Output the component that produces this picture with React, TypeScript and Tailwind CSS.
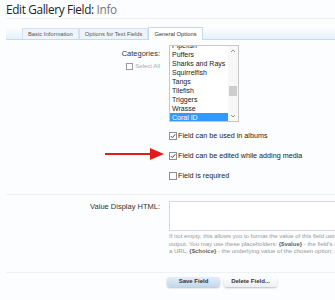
import React from "react";

const fishes = ["Pipefish", "Puffers", "Sharks and Rays", "Squirrelfish", "Tangs", "Tilefish", "Triggers", "Wrasse"];

function Check({ checked }: { checked: boolean }) {
  return (
    <span className="inline-flex h-[8px] w-[8px] items-center justify-center border border-[#8f8f8f] bg-white">
      {checked && (
        <svg width="6" height="6" viewBox="0 0 6 6">
          <path d="M0.8 3.1 L2.4 4.7 L5.3 1.2" fill="none" stroke="#333" strokeWidth="0.9" />
        </svg>
      )}
    </span>
  );
}

function CheckRow({ label, checked }: { label: string; checked: boolean }) {
  return (
    <div className="flex h-[9px] items-center gap-[1px] text-[7.2px] leading-[9px] text-[#222]">
      <Check checked={checked} />
      <span>{label}</span>
    </div>
  );
}

export default function App() {
  const tabs = ["Basic Information", "Options for Text Fields", "General Options"];
  return (
    <div
      className="relative h-[300px] w-[335px] overflow-hidden bg-[#fcfdfe]"
      style={{ fontFamily: '"Liberation Sans", Arial, sans-serif' }}
    >
      {/* title */}
      <div
        className="ml-[6px] h-[19px] border-b border-[#eef1f5] pt-[1px] text-[11.8px] leading-[16px] tracking-[-0.35px] text-[#222]"
        style={{ fontFamily: '"Open Sans", sans-serif' }}
      >
        Edit Gallery Field: <span className="text-[#777]">Info</span>
      </div>

      {/* tabs */}
      <div className="ml-[6px] mt-[8px] flex h-[13px] items-end border-b border-[#c4daf0] bg-gradient-to-b from-[#fcfdfe] to-[#e7f0f9] pl-[16px]">
        {tabs.map((t, i) => (
          <div
            key={t}
            className={
              i === 2
                ? "-mb-[1px] flex h-[13px] items-center border border-b-0 border-[#c4daf0] bg-white px-[5px] text-[5.8px] text-[#333]"
                : "flex h-[11px] items-center border border-b-0 border-[#d3e2f1] bg-[#eef4fa] px-[5px] text-[5.8px] text-[#555]"
            }
          >
            {t}
          </div>
        ))}
      </div>

      {/* categories */}
      <div className="mt-[5px] flex">
        <div className="flex w-[169px] shrink-0 flex-col items-end pr-[9px] pt-[4px]">
          <div className="text-[7.5px] leading-[9px] text-[#333]">Categories:</div>
          <div className="mt-[4px] flex items-center gap-[2px] text-[6px] text-[#aaa]">
            <span className="inline-block h-[7px] w-[7px] border border-[#999] bg-white" />
            <span>Select All</span>
          </div>
        </div>
        <div>
          <div className="flex h-[77px] w-[70px] overflow-hidden border border-[#c7c7c7] bg-white">
            <div className="flex-1 overflow-hidden">
              <div className="-mt-[5px] text-[7px] leading-[9px] text-[#222]">
                {fishes.map((f) => (
                  <div key={f} className="pl-[2px]">{f}</div>
                ))}
                <div className="bg-[#3399ff] pl-[2px] text-white">Coral ID</div>
              </div>
            </div>
            <div className="flex w-[10px] flex-col items-center bg-[#f7f7f7]">
              <svg className="mt-[3px]" width="6" height="4" viewBox="0 0 6 4">
                <path d="M1 3 L3 1 L5 3" fill="none" stroke="#888" strokeWidth="0.9" />
              </svg>
              <span className="mt-[33px] h-[10px] w-[8px] bg-[#cdcdcd]" />
              <span className="flex-1" />
              <svg className="mb-[3px]" width="6" height="4" viewBox="0 0 6 4">
                <path d="M1 1 L3 3 L5 1" fill="none" stroke="#888" strokeWidth="0.9" />
              </svg>
            </div>
          </div>

          <div className="mt-[9px] flex flex-col gap-[11px]">
            <CheckRow checked label="Field can be used in albums" />
            <CheckRow checked label="Field can be edited while adding media" />
            <CheckRow checked={false} label="Field is required" />
          </div>
        </div>
      </div>

      {/* red arrow */}
      <svg className="absolute left-[104px] top-[147px]" width="62" height="14" viewBox="0 0 62 14">
        <line x1="1" y1="7" x2="48" y2="7" stroke="#e31b1b" strokeWidth="2" />
        <polygon points="46,1 60,7 46,13" fill="#e31b1b" />
      </svg>

      <div className="ml-[6px] mt-[14px] border-t border-[#eef1f5]" />

      {/* value display html */}
      <div className="mt-[6px] flex">
        <div className="w-[169px] shrink-0 pr-[9px] pt-[1px] text-right text-[7.5px] leading-[9px] text-[#333]">
          Value Display HTML:
        </div>
        <div className="flex-1">
          <div className="h-[30px] w-[200px] border border-[#d4d8dd] bg-white" />
          <div className="mt-[2px] w-[200px] whitespace-nowrap text-[6px] leading-[7.5px] text-[#999]">
            <div>If not empty, this allows you to format the value of this field using</div>
            <div>
              output. You may use these placeholders: <b className="text-[#666]">{"{$value}"}</b> - the field's cu
            </div>
            <div>
              a URL; <b className="text-[#666]">{"{$choice}"}</b> - the underlying value of the chosen option; an
            </div>
          </div>
        </div>
      </div>

      <div className="ml-[6px] mt-[16px] border-t border-[#eef1f5]" />

      <div className="mt-[4px] flex gap-[4px] pl-[167px]">
        <div className="flex h-[10px] w-[53px] items-center justify-center rounded-[3px] bg-gradient-to-b from-[#e4eef8] to-[#c2d8ee] text-[6px] font-bold text-[#333] shadow-[0_1px_2px_rgba(0,0,0,0.25)]">
          Save Field
        </div>
        <div className="flex h-[10px] w-[53px] items-center justify-center rounded-[3px] bg-gradient-to-b from-[#ffffff] to-[#eceff2] text-[6px] font-bold text-[#333] shadow-[0_1px_2px_rgba(0,0,0,0.25)]">
          Delete Field...
        </div>
      </div>
    </div>
  );
}
